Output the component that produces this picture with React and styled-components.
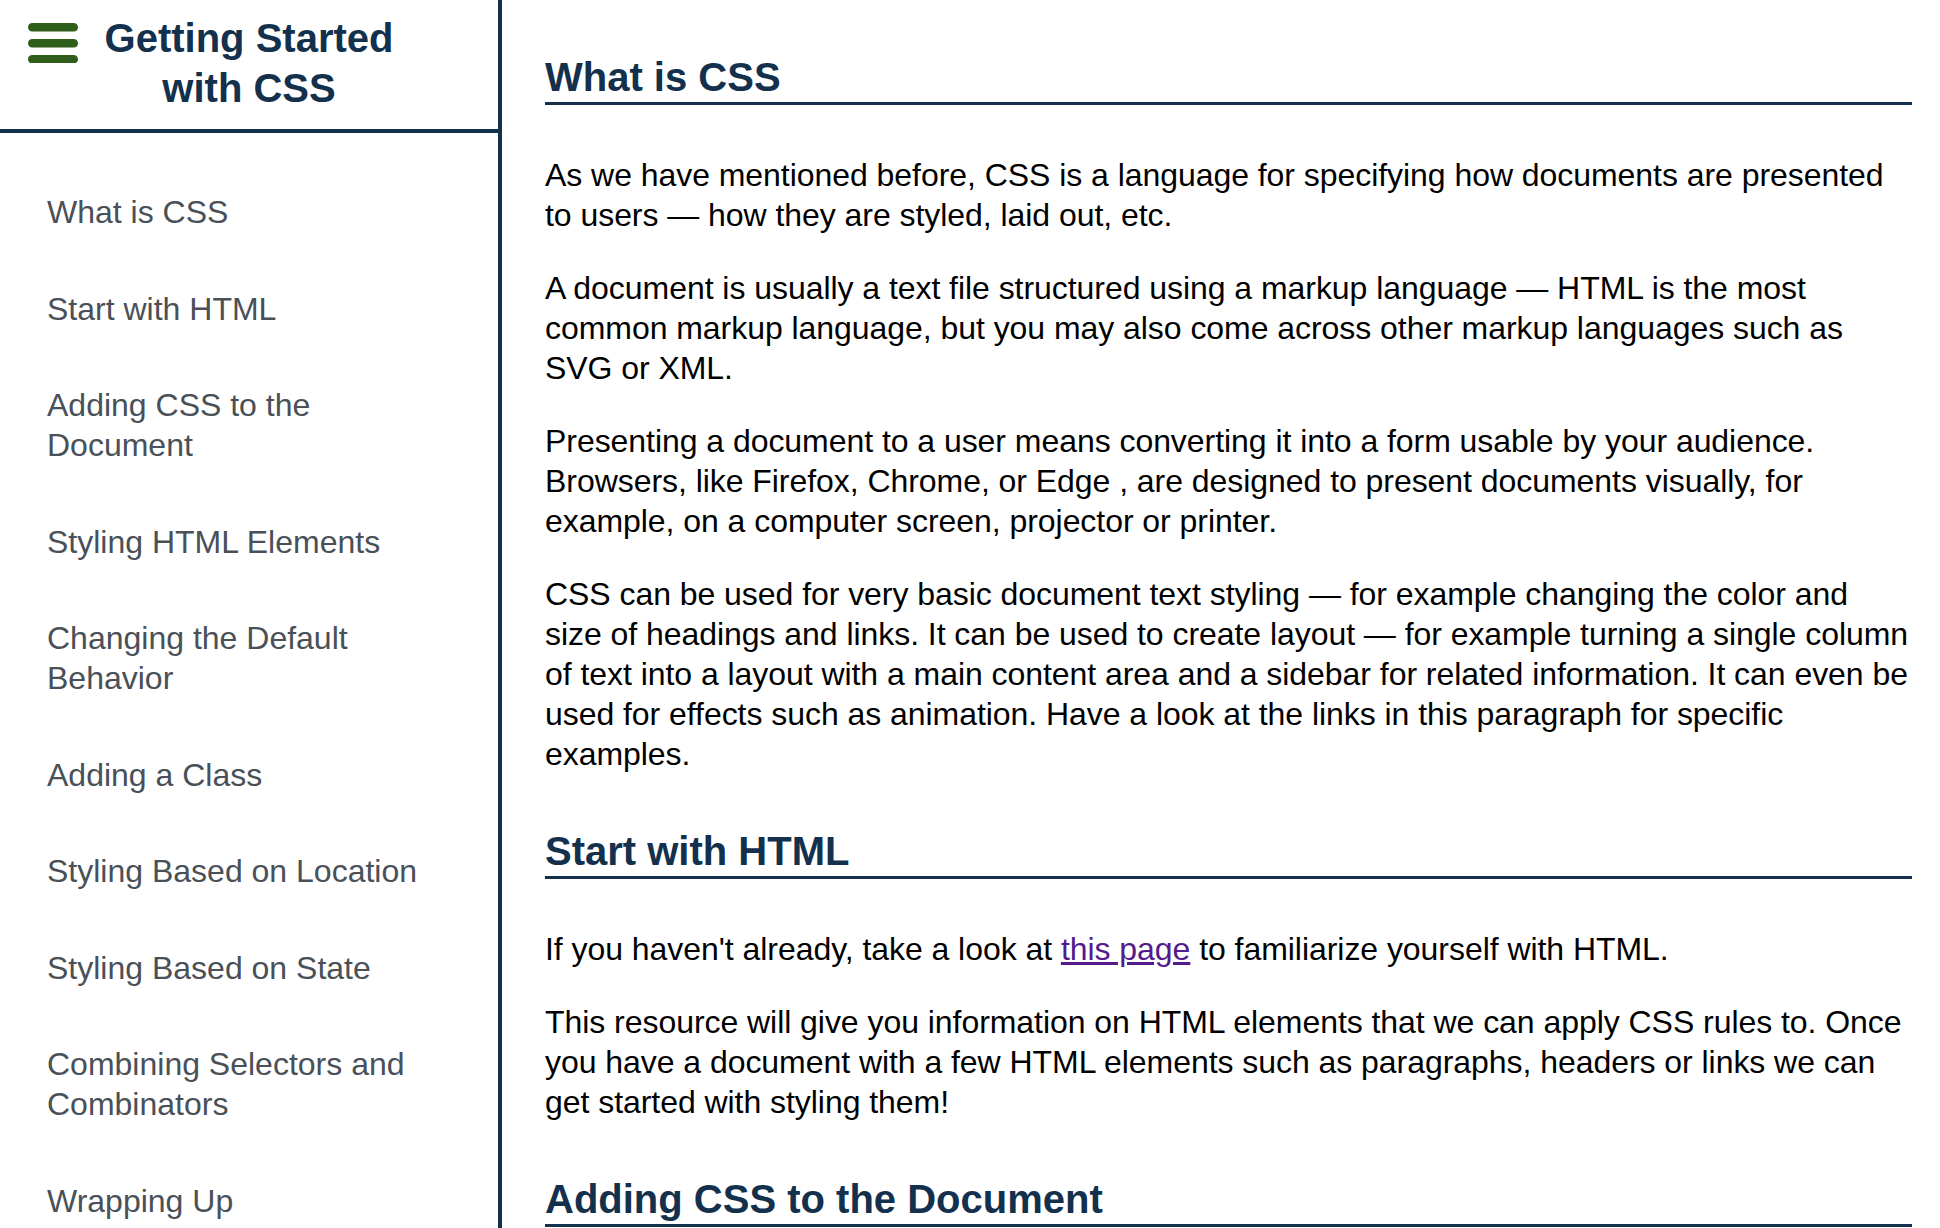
import React from 'react'
import styled, { createGlobalStyle } from 'styled-components'

const navy = '#13304d'

const GlobalStyle = createGlobalStyle`
    html, body {
        margin: 0;
        height: 100%;
        overflow: hidden;
        background: #fff;
    }
    body {
        font-family: 'Liberation Sans', Arial, Helvetica, sans-serif;
    }
`

const Layout = styled.div`
    display: flex;
    height: 100vh;
`
const Sidebar = styled.aside`
    width: 502px;
    flex-shrink: 0;
    box-sizing: border-box;
    border-right: 4px solid ${navy};
    display: flex;
    flex-direction: column;
    overflow: hidden;
`
const SidebarHeader = styled.header`
    display: grid;
    grid-template-columns: 100px 1fr 100px;
    padding: 13px 0 16px;
    border-bottom: 4px solid ${navy};
`
const MenuButton = styled.button`
    align-self: start;
    width: 50px;
    height: 40px;
    margin: 10px 0 0 28px;
    padding: 0;
    border: 0;
    background: none;
    cursor: pointer;
`
const Title = styled.h1`
    margin: 0;
    font-size: 40px;
    line-height: 50px;
    font-weight: bold;
    text-align: center;
    color: ${navy};
`
const NavList = styled.ul`
    list-style: none;
    margin: 0;
    padding: 31px 0 0;
`
const NavItem = styled.li`
    padding: 28px 47px 28.5px;
    font-size: 32px;
    line-height: 40px;
`
const NavLink = styled.a`
    color: #495057;
    text-decoration: none;
`
const Main = styled.main`
    flex: 1;
    min-width: 0;
    padding: 0 28px 0 43px;
    overflow: hidden;
`
const SectionHeading = styled.h2`
    margin: 55px 0 50px;
    padding-bottom: 2px;
    border-bottom: 3px solid ${navy};
    font-size: 40px;
    line-height: normal;
    font-weight: bold;
    color: ${navy};
`
const Para = styled.p`
    margin: 0 0 33px;
    font-size: 32px;
    line-height: 40px;
    letter-spacing: -0.05px;
    color: #000;
`
const TextLink = styled.a`
    color: #551a8b;
    text-decoration: underline;
`

const navItems = [
    'What is CSS',
    'Start with HTML',
    'Adding CSS to the Document',
    'Styling HTML Elements',
    'Changing the Default Behavior',
    'Adding a Class',
    'Styling Based on Location',
    'Styling Based on State',
    'Combining Selectors and Combinators',
    'Wrapping Up',
]

const MenuIcon = () => (
    <svg width="50" height="40" viewBox="0 0 50 40">
        <rect x="0" y="0" width="50" height="8.5" rx="4.25" fill="#2e5e1a" />
        <rect x="0" y="16" width="50" height="8.5" rx="4.25" fill="#2e5e1a" />
        <rect x="0" y="32" width="50" height="8.5" rx="4.25" fill="#2e5e1a" />
    </svg>
)

const App = () => {
    return (
        <Layout>
            <GlobalStyle />
            <Sidebar>
                <SidebarHeader>
                    <MenuButton aria-label="Toggle menu">
                        <MenuIcon />
                    </MenuButton>
                    <Title>Getting Started with CSS</Title>
                </SidebarHeader>
                <NavList>
                    {navItems.map(item => (
                        <NavItem key={item}>
                            <NavLink href="#">{item}</NavLink>
                        </NavItem>
                    ))}
                </NavList>
            </Sidebar>
            <Main>
                <section>
                    <SectionHeading>What is CSS</SectionHeading>
                    <Para>
                        As we have mentioned before, CSS is a language for specifying how documents are presented to users — how they are styled, laid out, etc.
                    </Para>
                    <Para>
                        A document is usually a text file structured using a markup language — HTML is the most common markup language, but you may also come across other markup languages such as SVG or XML.
                    </Para>
                    <Para>
                        Presenting a document to a user means converting it into a form usable by your audience. Browsers, like Firefox, Chrome, or Edge , are designed to present documents visually, for example, on a computer screen, projector or printer.
                    </Para>
                    <Para>
                        CSS can be used for very basic document text styling — for example changing the color and size of headings and links. It can be used to create layout — for example turning a single column of text into a layout with a main content area and a sidebar for related information. It can even be used for effects such as animation. Have a look at the links in this paragraph for specific examples.
                    </Para>
                </section>
                <section>
                    <SectionHeading>Start with HTML</SectionHeading>
                    <Para>
                        If you haven't already, take a look at <TextLink href="#">this page</TextLink> to familiarize yourself with HTML.
                    </Para>
                    <Para>
                        This resource will give you information on HTML elements that we can apply CSS rules to. Once you have a document with a few HTML elements such as paragraphs, headers or links we can get started with styling them!
                    </Para>
                </section>
                <section>
                    <SectionHeading>Adding CSS to the Document</SectionHeading>
                </section>
            </Main>
        </Layout>
    )
}

export default App
